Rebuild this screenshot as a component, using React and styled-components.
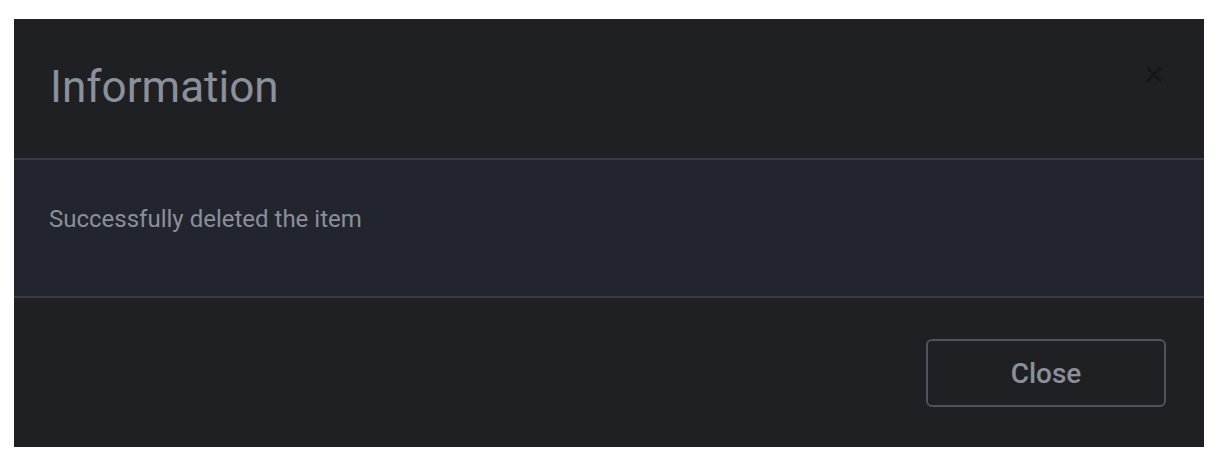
import React from 'react';
import styled, { createGlobalStyle } from 'styled-components';

const GlobalStyle = createGlobalStyle`
  html, body {
    margin: 0;
    padding: 0;
    background: #ffffff;
    font-family: Roboto, "Liberation Sans", sans-serif;
  }
`;

const Page = styled.div`
  padding: 19px 22px 17px 14px;
`;

const Dialog = styled.section`
  width: 1190px;
  background-color: #1f2024;
  display: flex;
  flex-direction: column;
`;

const Header = styled.header`
  display: flex;
  justify-content: space-between;
  align-items: flex-start;
  padding: 42px 41px 45px 36px;
  border-bottom: 2px solid #373a45;
`;

const Title = styled.h2`
  margin: 0;
  font-size: 44px;
  line-height: 52px;
  font-weight: 400;
  color: #8b9099;
`;

const CloseIcon = styled.button`
  margin-top: 5px;
  padding: 0;
  border: none;
  background: none;
  width: 18px;
  height: 17px;
  display: flex;
  cursor: pointer;
`;

const Body = styled.div`
  background-color: #22252e;
  padding: 43px 35px 61px;
  border-bottom: 2px solid #373a45;
`;

const Message = styled.p`
  margin: 0;
  font-size: 24px;
  line-height: 32px;
  color: #8b8f98;
`;

const Footer = styled.footer`
  display: flex;
  justify-content: flex-end;
  padding: 41px 38px 40px;
`;

const Button = styled.button`
  width: 240px;
  height: 68px;
  box-sizing: border-box;
  border: 2px solid #4f535d;
  border-radius: 6px;
  background: transparent;
  color: #8b9099;
  font-family: Roboto, "Liberation Sans", sans-serif;
  font-size: 28px;
  font-weight: 500;
  cursor: pointer;
`;

const App = () => (
  <Page>
    <GlobalStyle />
    <Dialog>
      <Header>
        <Title>Information</Title>
        <CloseIcon aria-label="Close">
          <svg width="18" height="17" viewBox="0 0 18 17">
            <path d="M2 1.5 L16 15.5 M16 1.5 L2 15.5" stroke="#16171a" strokeWidth="3" />
          </svg>
        </CloseIcon>
      </Header>
      <Body>
        <Message>Successfully deleted the item</Message>
      </Body>
      <Footer>
        <Button>Close</Button>
      </Footer>
    </Dialog>
  </Page>
);

export default App;
